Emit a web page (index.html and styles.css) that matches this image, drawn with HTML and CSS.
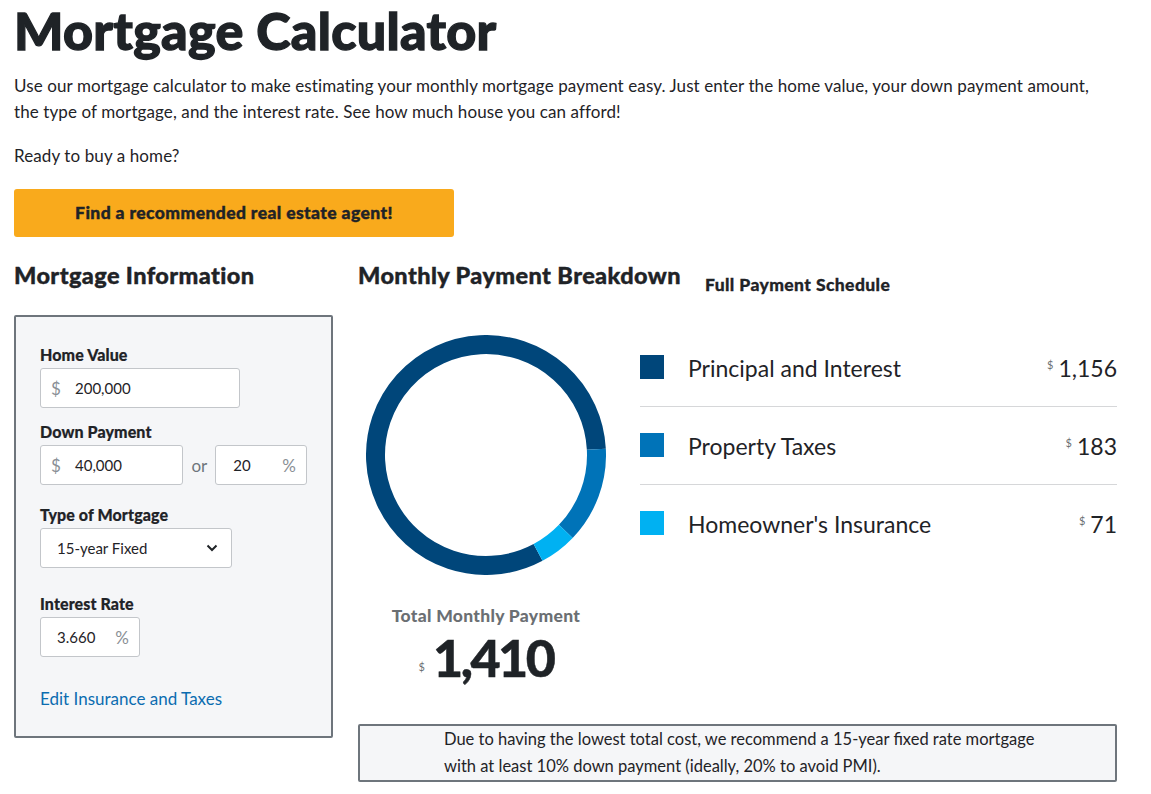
FILE: index.html
```html
<!DOCTYPE html>
<html lang="en">
<head>
    <meta charset="UTF-8">
    <meta name="viewport" content="width=device-width, initial-scale=1.0">
    <title>Mortgage Calculator</title>
    <link rel="stylesheet" href="styles.css">
</head>
<body>
    <div class="page">
        <h1>Mortgage Calculator</h1>
        <p class="intro">Use our mortgage calculator to make estimating your monthly mortgage payment easy. Just enter the home value, your down payment amount, the type of mortgage, and the interest rate. See how much house you can afford!</p>
        <p class="ready">Ready to buy a home?</p>
        <a class="agent-btn" href="#">Find a recommended real estate agent!</a>

        <div class="calc">
            <div class="info-col">
                <h2>Mortgage Information</h2>
                <div class="info-panel">
                    <div class="field first">
                        <label>Home Value</label>
                        <div class="input wide"><span class="unit">$</span><span class="val">200,000</span></div>
                    </div>
                    <div class="field">
                        <label>Down Payment</label>
                        <div class="down-row">
                            <div class="input down"><span class="unit">$</span><span class="val">40,000</span></div>
                            <span class="or">or</span>
                            <div class="input pct"><span class="val">20</span><span class="unit">%</span></div>
                        </div>
                    </div>
                    <div class="field gap-lg">
                        <label>Type of Mortgage</label>
                        <div class="input select"><span class="val">15-year Fixed</span>
                            <svg width="12" height="8" viewBox="0 0 12 8"><path d="M1.5 1.5 L6 6 L10.5 1.5" fill="none" stroke="#1f2327" stroke-width="2"/></svg>
                        </div>
                    </div>
                    <div class="field gap-xl">
                        <label>Interest Rate</label>
                        <div class="input rate"><span class="val">3.660</span><span class="unit">%</span></div>
                    </div>
                    <a class="edit-link" href="#">Edit Insurance and Taxes</a>
                </div>
            </div>

            <div class="breakdown-col">
                <div class="breakdown-head">
                    <h2>Monthly Payment Breakdown</h2>
                    <a class="schedule" href="#">Full Payment Schedule</a>
                </div>
                <div class="breakdown-body">
                    <div class="chart">
                        <svg width="240" height="240" viewBox="0 0 240 240">
                            <g transform="rotate(-3 120 120)">
                                <circle cx="120" cy="120" r="110.5" fill="none" stroke="#00467a" stroke-width="19"
                                    stroke-dasharray="569.3 694.3" stroke-dashoffset="-125"/>
                                <circle cx="120" cy="120" r="110.5" fill="none" stroke="#0073b8" stroke-width="19"
                                    stroke-dasharray="90.1 694.3" stroke-dashoffset="0"/>
                                <circle cx="120" cy="120" r="110.5" fill="none" stroke="#00b1f2" stroke-width="19"
                                    stroke-dasharray="34.9 694.3" stroke-dashoffset="-90.1"/>
                            </g>
                        </svg>
                        <div class="total-label">Total Monthly Payment</div>
                        <div class="total"><span class="cur">$</span>1,410</div>
                    </div>
                    <ul class="legend">
                        <li><span class="swatch s1"></span><span class="name">Principal and Interest</span><span class="amt"><span class="cur">$</span>1,156</span></li>
                        <li><span class="swatch s2"></span><span class="name">Property Taxes</span><span class="amt"><span class="cur">$</span>183</span></li>
                        <li><span class="swatch s3"></span><span class="name">Homeowner's Insurance</span><span class="amt"><span class="cur">$</span>71</span></li>
                    </ul>
                </div>
                <div class="notice">Due to having the lowest total cost, we recommend a 15-year fixed rate mortgage with at least 10% down payment (ideally, 20% to avoid PMI).</div>
            </div>
        </div>
    </div>
</body>
</html>
```

FILE: styles.css
```css
body {
    margin: 0;
    font-family: Lato, "Open Sans", sans-serif;
    color: #1f2327;
    background-color: #ffffff;
}
.page {
    padding: 0 14px;
}
h1 {
    font-size: 52px;
    font-weight: 900;
    letter-spacing: 0.3px;
    -webkit-text-stroke: 1.3px #1f2327;
    margin: 0;
    line-height: 60px;
}
.intro {
    max-width: 1095px;
    font-size: 17px;
    line-height: 26px;
    letter-spacing: 0.1px;
    margin: 13px 0 0;
}
.ready {
    font-size: 17px;
    line-height: 26px;
    letter-spacing: 0.1px;
    margin: 18px 0 0;
}
.agent-btn {
    display: block;
    width: 440px;
    height: 48px;
    line-height: 48px;
    margin-top: 20px;
    background-color: #f9aa1c;
    border-radius: 3px;
    text-align: center;
    font-size: 17.5px;
    font-weight: 900;
    letter-spacing: 0.4px;
    -webkit-text-stroke: 0.4px #1f2327;
    color: #1f2327;
    text-decoration: none;
}
.calc {
    display: flex;
    gap: 25px;
    margin-top: 24px;
}
h2 {
    font-size: 23.5px;
    font-weight: 900;
    letter-spacing: 0.4px;
    -webkit-text-stroke: 0.4px #1f2327;
    margin: 0;
    line-height: 28px;
}
.info-col {
    width: 319px;
}
.info-panel {
    margin-top: 26px;
    border: 2px solid #6e757c;
    border-radius: 2px;
    background-color: #f5f6f8;
    padding: 29px 24px 28px;
}
.field label {
    display: block;
    font-size: 16px;
    font-weight: 900;
    letter-spacing: 0.1px;
    -webkit-text-stroke: 0.2px #1f2327;
    line-height: 18px;
    margin-bottom: 4px;
}
.field + .field {
    margin-top: 15px;
}
.field.gap-lg {
    margin-top: 21px;
}
.field.gap-xl {
    margin-top: 27px;
}
.input {
    box-sizing: border-box;
    height: 40px;
    border: 1px solid #c3c6ca;
    border-radius: 3px;
    background-color: #ffffff;
    display: flex;
    align-items: center;
    font-size: 15px;
    padding: 0 10px;
}
.input .unit {
    color: #8a9096;
    font-size: 17px;
}
.wide {
    width: 200px;
}
.wide .unit, .down .unit {
    width: 24px;
}
.down-row {
    display: flex;
    align-items: center;
}
.down {
    width: 144px;
}
.or {
    color: #6e757c;
    font-size: 17px;
    width: 32px;
    text-align: center;
}
.pct {
    width: 92px;
    padding: 0 10px 0 17px;
    justify-content: space-between;
}
.select {
    width: 192px;
    padding: 0 13px 0 16px;
    justify-content: space-between;
}
.rate {
    width: 100px;
    padding: 0 10px 0 16px;
    justify-content: space-between;
}
.edit-link {
    display: block;
    margin-top: 33px;
    font-size: 17px;
    line-height: 18px;
    color: #0b6cb0;
    text-decoration: none;
}
.breakdown-col {
    flex: 1;
    max-width: 759px;
}
.breakdown-head {
    display: flex;
    align-items: flex-end;
    gap: 24px;
}
.schedule {
    font-size: 17.5px;
    font-weight: 900;
    letter-spacing: 0.4px;
    -webkit-text-stroke: 0.3px #1f2327;
    color: #1f2327;
    text-decoration: none;
    line-height: 20px;
    margin-bottom: -6px;
}
.breakdown-body {
    display: flex;
    margin-top: 40px;
}
.chart {
    width: 258px;
    padding-left: 8px;
    box-sizing: border-box;
    text-align: center;
    padding-top: 6px;
}
.chart svg {
    display: block;
}
.total-label {
    margin-top: 30px;
    font-size: 17.5px;
    font-weight: 900;
    letter-spacing: 0.3px;
    color: #6b6f73;
    text-align: center;
    width: 240px;
}
.total {
    width: 240px;
    text-align: center;
    font-size: 52px;
    font-weight: 900;
    letter-spacing: -2.5px;
    -webkit-text-stroke: 0.5px #1f2327;
    line-height: 56px;
    margin-top: 3px;
}
.total .cur {
    font-size: 11px;
    font-weight: 400;
    color: #6b6f73;
    vertical-align: 6px;
    margin-right: 8px;
    letter-spacing: 0;
    -webkit-text-stroke: 0;
}
.legend {
    list-style: none;
    margin: 0 0 0 24px;
    padding: 0;
    flex: 1;
}
.legend li {
    display: flex;
    align-items: center;
    height: 77px;
    border-bottom: 1px solid #d6d7d9;
    font-size: 23px;
}
.legend li:last-child {
    border-bottom: none;
}
.swatch {
    width: 24px;
    height: 24px;
    margin-right: 24px;
    margin-top: -2px;
}
.s1 { background-color: #00467a; }
.s2 { background-color: #0073b8; }
.s3 { background-color: #00b1f2; }
.name {
    flex: 1;
}
.amt .cur {
    font-size: 11px;
    color: #6b6f73;
    vertical-align: 8px;
    margin-right: 5px;
}
.notice {
    margin-top: 29px;
    border: 2px solid #6e757c;
    border-radius: 2px;
    background-color: #f5f6f8;
    padding: 0 70px 0 84px;
    font-size: 16.5px;
    line-height: 27px;
}
```
